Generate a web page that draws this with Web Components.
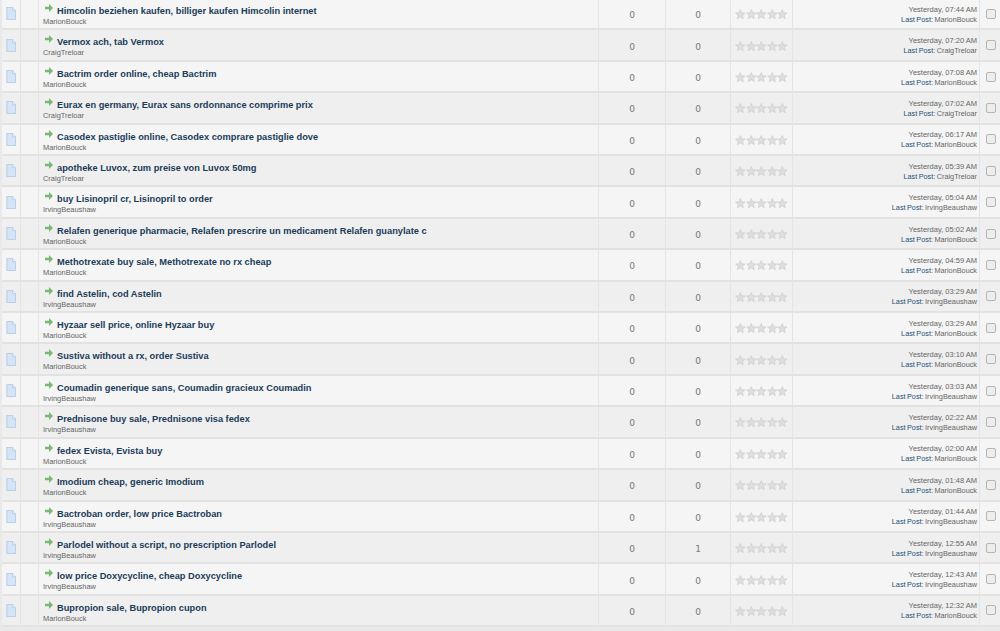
<!DOCTYPE html>
<html>
<head>
<meta charset="utf-8">
<title>Threads</title>
<style>
    html, body { margin: 0; padding: 0; background: #e9e9e9; overflow: hidden; }
</style>
</head>
<body>
<thread-list></thread-list>

<template id="row-template">
    <style>
        :host {
            display: grid;
            grid-template-columns: 19px 18px 560px 67px 65px 62px 187px 20px;
            height: 31.42px;
            box-sizing: border-box;
            padding-left: 2px;
            font-family: "DejaVu Sans", Verdana, sans-serif;
            color: #777;
        }
        :host([alt]) .cell { background: #efefef; }
        .cell {
            background: #f5f5f5;
            border-right: 1px solid #e4e4e4;
            border-bottom: 2px solid #e2e2e2;
            box-sizing: border-box;
            display: flex;
            align-items: center;
            justify-content: center;
            min-width: 0;
        }
        .cell:first-child { border-left: 1px solid #e8e8e8; }
        .cell:last-child { border-right: 0; }
        .subject {
            flex-direction: column;
            align-items: flex-start;
            justify-content: flex-start;
            padding: 5px 0 0 4px;
        }
        .title-line { display: flex; align-items: flex-start; gap: 4px; height: 13px; padding-left: 2px; }
        .title-line svg { margin-top: 0; }
        .title {
            font: bold 9.25px/15px "Liberation Sans", Arial, sans-serif;
            color: #1b3c5a;
            white-space: nowrap;
        }
        .starter, .last {
            font: 7.45px/10px "Liberation Sans", Arial, sans-serif;
            color: #666;
            white-space: nowrap;
        }
        .count { font: 9px "DejaVu Sans", Verdana, sans-serif; color: #777; padding-top: 3px; }
        .stars { padding-top: 1px; }
        .latest {
            flex-direction: column;
            align-items: flex-end;
            padding: 2px 2px 0 0;
        }
        .latest .when { font-size: 7.5px; }
        .latest b { font-weight: normal; color: #1d4f78; }
        .latest .post { word-spacing: -0.6px; font-size: 7.3px; }
        input {
            margin: 0 0 0 1px;
            width: 10px;
            height: 10px;
            appearance: none;
            box-sizing: border-box;
            border: 1px solid #b5b5b5;
            border-radius: 2px;
            background: #ededed;
        }
    </style>
    <div class="cell">
        <svg width="10" height="13" viewBox="0 0 12 14" preserveAspectRatio="none">
            <path d="M1 .5h7l3.500 3.500v9.500H1z" fill="#d5e4f6" stroke="#b4cae3"/>
            <path d="M8 .5v3.500h3.500" fill="#eef5fc" stroke="#b4cae3"/>
        </svg>
    </div>
    <div class="cell"></div>
    <div class="cell subject">
        <div class="title-line">
            <svg width="8" height="8" viewBox="0 0 10 9" preserveAspectRatio="none">
                <path d="M0 3h5V0l5 4.500L5 9V6H0z" fill="#78b774"/>
            </svg>
            <span class="title"></span>
        </div>
        <span class="starter"></span>
    </div>
    <div class="cell count replies"></div>
    <div class="cell count views"></div>
    <div class="cell stars"></div>
    <div class="cell latest">
        <span class="last when"></span>
        <span class="last post"><b>Last Post:</b> <span class="who"></span></span>
    </div>
    <div class="cell"><input type="checkbox"></div>
</template>

<script>
const STAR = `<svg width="10.6" height="12" viewBox="0 0 24 24" style="flex:none">
    <path d="M12 2l3 7.200 7.800.6-5.900 5.100 1.800 7.600L12 18.400l-6.700 4.100 1.800-7.600L1.200 9.800 9 9.200z"
        fill="#dedede" stroke="#cbcbcb" stroke-width="1.500"/></svg>`;

const THREADS = [
    ["Himcolin beziehen kaufen, billiger kaufen Himcolin internet", "MarionBouck", "07:44 AM", "MarionBouck", 0],
    ["Vermox ach, tab Vermox", "CraigTreloar", "07:20 AM", "CraigTreloar", 0],
    ["Bactrim order online, cheap Bactrim", "MarionBouck", "07:08 AM", "MarionBouck", 0],
    ["Eurax en germany, Eurax sans ordonnance comprime prix", "CraigTreloar", "07:02 AM", "CraigTreloar", 0],
    ["Casodex pastiglie online, Casodex comprare pastiglie dove", "MarionBouck", "06:17 AM", "MarionBouck", 0],
    ["apotheke Luvox, zum preise von Luvox 50mg", "CraigTreloar", "05:39 AM", "CraigTreloar", 0],
    ["buy Lisinopril cr, Lisinopril to order", "IrvingBeaushaw", "05:04 AM", "IrvingBeaushaw", 0],
    ["Relafen generique pharmacie, Relafen prescrire un medicament Relafen guanylate c", "MarionBouck", "05:02 AM", "MarionBouck", 0],
    ["Methotrexate buy sale, Methotrexate no rx cheap", "MarionBouck", "04:59 AM", "MarionBouck", 0],
    ["find Astelin, cod Astelin", "IrvingBeaushaw", "03:29 AM", "IrvingBeaushaw", 0],
    ["Hyzaar sell price, online Hyzaar buy", "MarionBouck", "03:29 AM", "MarionBouck", 0],
    ["Sustiva without a rx, order Sustiva", "MarionBouck", "03:10 AM", "MarionBouck", 0],
    ["Coumadin generique sans, Coumadin gracieux Coumadin", "IrvingBeaushaw", "03:03 AM", "IrvingBeaushaw", 0],
    ["Prednisone buy sale, Prednisone visa fedex", "IrvingBeaushaw", "02:22 AM", "IrvingBeaushaw", 0],
    ["fedex Evista, Evista buy", "MarionBouck", "02:00 AM", "MarionBouck", 0],
    ["Imodium cheap, generic Imodium", "MarionBouck", "01:48 AM", "MarionBouck", 0],
    ["Bactroban order, low price Bactroban", "IrvingBeaushaw", "01:44 AM", "IrvingBeaushaw", 0],
    ["Parlodel without a script, no prescription Parlodel", "IrvingBeaushaw", "12:55 AM", "IrvingBeaushaw", 1],
    ["low price Doxycycline, cheap Doxycycline", "IrvingBeaushaw", "12:43 AM", "IrvingBeaushaw", 0],
    ["Bupropion sale, Bupropion cupon", "MarionBouck", "12:32 AM", "MarionBouck", 0],
];

class ThreadRow extends HTMLElement {
    constructor() {
        super();
        const root = this.attachShadow({ mode: "open" });
        root.appendChild(document.getElementById("row-template").content.cloneNode(true));
    }

    fill(title, starter, time, lastBy, views) {
        const root = this.shadowRoot;
        root.querySelector(".title").textContent = title;
        root.querySelector(".starter").textContent = starter;
        root.querySelector(".replies").textContent = "0";
        root.querySelector(".views").textContent = views;
        root.querySelector(".stars").innerHTML = STAR.repeat(5);
        root.querySelector(".when").textContent = "Yesterday, " + time;
        root.querySelector(".who").textContent = lastBy;
    }
}

class ThreadList extends HTMLElement {
    constructor() {
        super();
        const root = this.attachShadow({ mode: "open" });
        root.innerHTML = `
            <style>
                :host { display: block; margin-top: -1px; }
            </style>
            <slot></slot>
        `;
    }

    connectedCallback() {
        THREADS.forEach((t, i) => {
            const row = document.createElement("thread-row");
            if (i % 2) row.setAttribute("alt", "");
            this.appendChild(row);
            row.fill(...t);
        });
    }
}

customElements.define("thread-row", ThreadRow);
customElements.define("thread-list", ThreadList);
</script>
</body>
</html>
